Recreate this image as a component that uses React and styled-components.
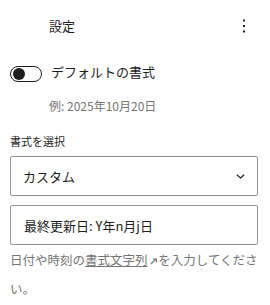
import React from "react";
import styled, { createGlobalStyle } from "styled-components";

const Global = createGlobalStyle`
  html, body { margin: 0; padding: 0; background: #fff; }
  body { font-family: "Noto Sans CJK JP", "Noto Sans", sans-serif; color: #1e1e1e; }
`;

const Panel = styled.div`
  width: 270px;
  display: flex;
  flex-direction: column;
`;

const Header = styled.div`
  height: 52px;
  display: flex;
  align-items: center;
  justify-content: space-between;
  padding: 0 20px 0 49px;
  box-sizing: border-box;
`;

const Title = styled.span`
  font-size: 13px;
  line-height: 16px;
`;

const Kebab = styled.button`
  border: 0;
  background: none;
  padding: 0;
  width: 12px;
  height: 24px;
  display: flex;
  align-items: center;
  justify-content: center;
`;

const ToggleRow = styled.div`
  margin-top: 12px;
  height: 20px;
  display: flex;
  align-items: center;
  gap: 9px;
  padding-left: 10px;
`;

const Track = styled.span`
  flex: none;
  width: 32px;
  height: 16px;
  box-sizing: border-box;
  border: 1px solid #1e1e1e;
  border-radius: 9px;
  position: relative;
`;

const Knob = styled.span`
  position: absolute;
  left: 2px;
  top: 1px;
  width: 12px;
  height: 12px;
  border-radius: 50%;
  background: #1e1e1e;
`;

const ToggleText = styled.span`
  font-size: 13px;
  line-height: 16px;
  margin-top: -4px;
`;

const Text = styled.div`
  flex: none;
  height: ${(p) => p.$h}px;
  margin-top: ${(p) => p.$mt}px;
  padding-left: ${(p) => p.$pl}px;
  font-size: ${(p) => p.$fs}px;
  line-height: ${(p) => p.$h}px;
  color: ${(p) => p.$color || "#1e1e1e"};
  overflow: hidden;
`;

const Field = styled.div`
  flex: none;
  margin: ${(p) => p.$mt}px 12px 0 10px;
  height: 40px;
  box-sizing: border-box;
  border: 1px solid #949494;
  border-radius: 2px;
  display: flex;
  align-items: center;
  justify-content: space-between;
  padding: 0 12px 0 ${(p) => p.$pl}px;
  font-size: 13px;
`;

const Help = styled.p`
  margin: 0;
  padding: 0 12px 0 10px;
  font-size: 12.5px;
  line-height: 29px;
  color: #757575;
`;

const Link = styled.a`
  color: #757575;
  text-decoration: underline;
`;

export default function App() {
  return (
    <Panel>
      <Global />
      <Header>
        <Title>設定</Title>
        <Kebab aria-label="オプション">
          <svg width="4" height="14" viewBox="0 0 4 14">
            <rect x="1" y="0.5" width="2" height="2" fill="#1e1e1e" />
            <rect x="1" y="6" width="2" height="2" fill="#1e1e1e" />
            <rect x="1" y="11.5" width="2" height="2" fill="#1e1e1e" />
          </svg>
        </Kebab>
      </Header>
      <ToggleRow>
        <Track>
          <Knob />
        </Track>
        <ToggleText>デフォルトの書式</ToggleText>
      </ToggleRow>
      <Text $h={18} $mt={13} $pl={49} $fs={12} $color="#757575">
        例: 2025年10月20日
      </Text>
      <Text $h={16} $mt={18} $pl={10} $fs={11}>
        書式を選択
      </Text>
      <Field $mt={7} $pl={12}>
        <span>カスタム</span>
        <svg width="9" height="5" viewBox="0 0 9 5">
          <path d="M0.8 0.8 L4.5 4 L8.2 0.8" fill="none" stroke="#1e1e1e" strokeWidth="1.2" />
        </svg>
      </Field>
      <Field $mt={9} $pl={13}>
        <span>最終更新日: Y年n月j日</span>
      </Field>
      <Help>
        日付や時刻の<Link>書式文字列</Link>{" "}
        <svg width="8" height="8" viewBox="0 0 8 8">
          <path d="M1 7 L6 2 M3 2 H6.5 V5.5" fill="none" stroke="#757575" strokeWidth="1.2" />
        </svg>
        を入力してください。
      </Help>
    </Panel>
  );
}
